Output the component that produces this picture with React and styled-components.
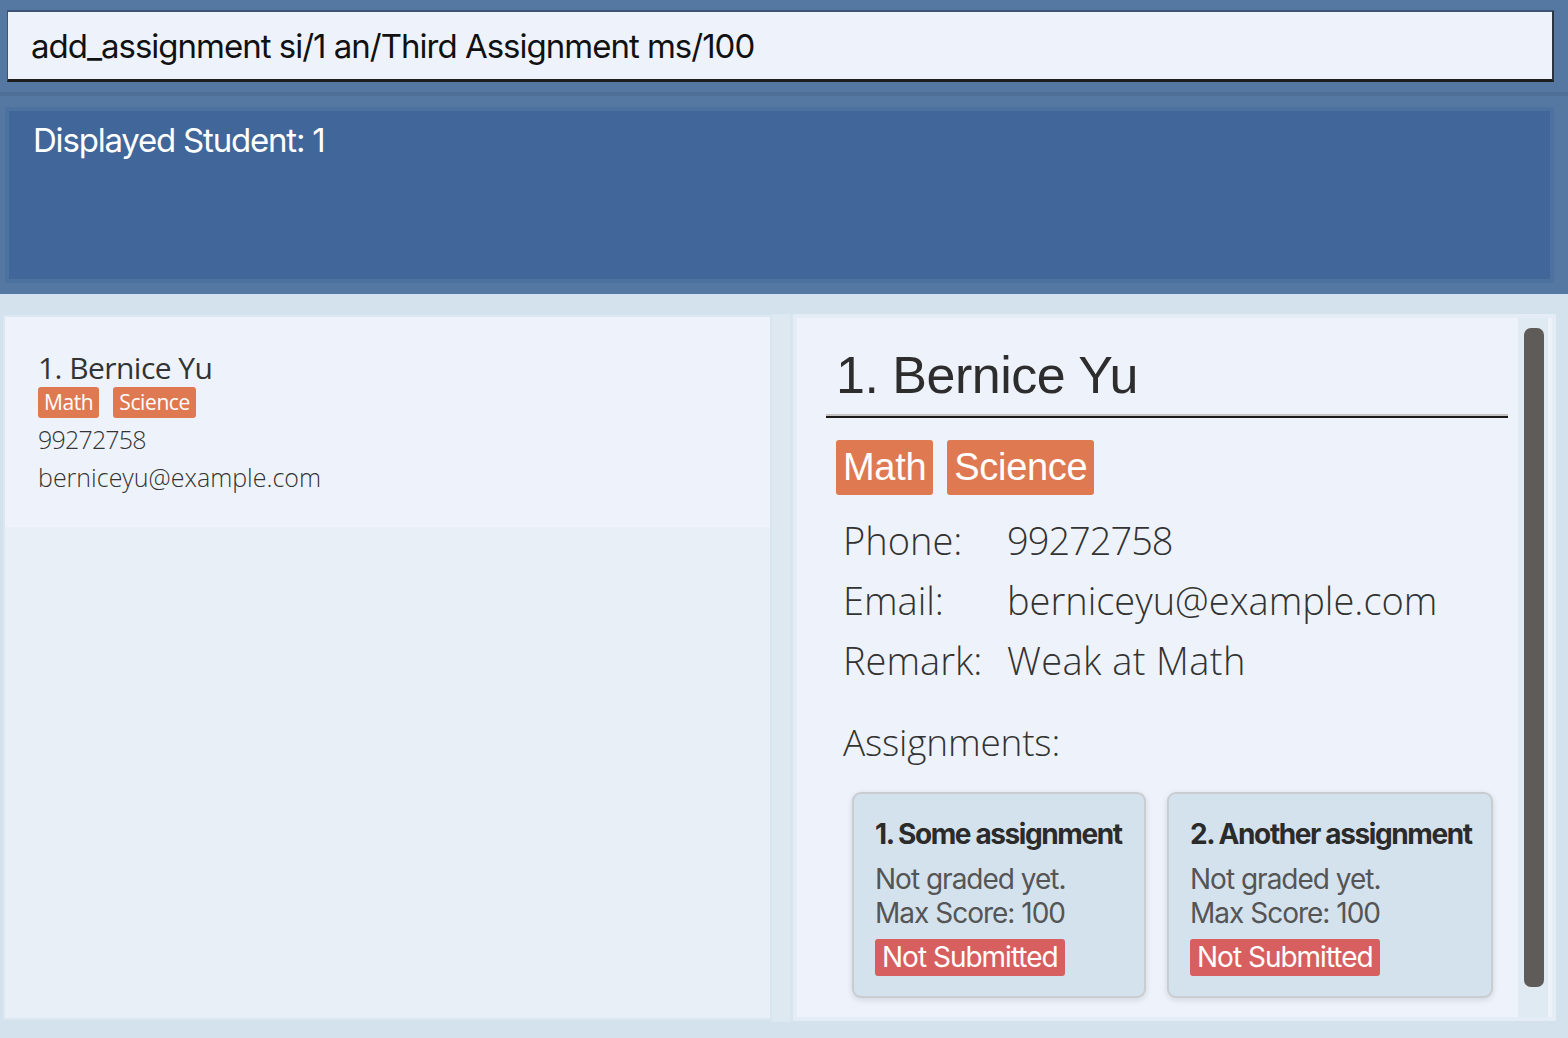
import React from "react";
import styled, { createGlobalStyle } from "styled-components";

const GlobalStyle = createGlobalStyle`
  html, body {
    margin: 0;
    padding: 0;
    background: #d4e2ed;
  }
  * {
    box-sizing: border-box;
  }
`;

const Window = styled.div`
  width: 1568px;
  height: 1038px;
  display: flex;
  flex-direction: column;
  background: #d4e2ed;
  overflow: hidden;
`;

const TopArea = styled.div`
  background: #5578a2;
  display: flex;
  flex-direction: column;
`;

const CommandBox = styled.div`
  margin: 10px 14px 10px 7px;
  height: 72px;
  background: #eef3fb;
  border-top: 2px solid #3d5573;
  border-left: 1px solid #3d5573;
  border-right: 2px solid #2b3542;
  border-bottom: 3px solid #1e1e1e;
  display: flex;
  align-items: center;
  padding-left: 23px;
  font-family: Inter, "Noto Sans", sans-serif;
  font-size: 33px;
  letter-spacing: -1px;
  color: #111;
`;

const Separator = styled.div`
  height: 4px;
  background: #4d6f98;
`;

const ResultWrap = styled.div`
  padding: 11px 14px 11px 5px;
`;

const ResultBox = styled.div`
  height: 176px;
  background: #41669a;
  border: 4px solid #4e72a0;
  padding: 9px 24px;
  font-family: Inter, "Noto Sans", sans-serif;
  font-size: 33px;
  letter-spacing: -1.2px;
  color: #ffffff;
`;

const MainArea = styled.div`
  flex: 1;
  display: flex;
  padding: 21px 12px 18px 3px;
  min-height: 0;
`;

const ListPanel = styled.div`
  width: 767px;
  background: #e8eff7;
  border: 2px solid #dce7f1;
  border-right: none;
  display: flex;
  flex-direction: column;
`;

const ListCard = styled.div`
  height: 210px;
  background: #eef3fb;
  padding: 34px 30px 34px 33px;
  font-family: "Open Sans", sans-serif;
  font-weight: 300;
  color: #333;
`;

const ListName = styled.div`
  font-size: 30px;
  line-height: 34px;
  letter-spacing: -0.55px;
  font-weight: 400;
`;

const TagRow = styled.div`
  display: flex;
  gap: ${(p) => p.gap}px;
  margin: ${(p) => p.margin};
`;

const Tag = styled.span`
  background: #df7952;
  color: #fff;
  border-radius: 3px;
  font-family: ${(p) => (p.big ? '"Liberation Sans", Arial, sans-serif' : '"Open Sans", sans-serif')};
  font-size: ${(p) => p.size}px;
  height: ${(p) => p.h}px;
  line-height: ${(p) => p.h}px;
  padding: 0 ${(p) => p.pad}px;
  letter-spacing: ${(p) => (p.big ? "-0.3px" : "-0.4px")};
  font-weight: 400;
`;

const ListLine = styled.div`
  font-size: 25px;
  line-height: 38px;
  letter-spacing: ${(p) => p.spacing || 0}px;
`;

const Divider = styled.div`
  width: 23px;
  background: #dde8f1;
  border-left: 2px solid #d8e4ee;
  border-right: 3px solid #d8e4ee;
  margin-top: -1px;
  margin-bottom: -2px;
`;

const DetailPanel = styled.div`
  flex: 1;
  display: flex;
  background: #eef3fb;
  border: 4px solid #e4edf6;
  margin-top: -1px;
  margin-bottom: -1px;
`;

const DetailContent = styled.div`
  flex: 1;
  padding: 27px 10px 0 29px;
  display: flex;
  flex-direction: column;
`;

const DetailName = styled.div`
  font-family: "Liberation Sans", Arial, sans-serif;
  font-size: 52px;
  line-height: 60px;
  color: #2d2d2d;
  padding-left: 10px;
  letter-spacing: -0.5px;
`;

const Underline = styled.div`
  height: 4px;
  margin-top: 9px;
  border-top: 2px solid #c4c4c4;
  border-bottom: 2px solid #1a1a1a;
`;

const InfoRow = styled.div`
  display: flex;
  padding-left: 17px;
  font-family: "Open Sans", sans-serif;
  font-weight: 300;
  font-size: 38px;
  line-height: 60px;
  color: #333;
`;

const Label = styled.span`
  width: 164px;
  flex-shrink: 0;
`;

const Value = styled.span`
  letter-spacing: ${(p) => p.spacing || 0}px;
`;

const Heading = styled.div`
  padding-left: 17px;
  margin-top: 22px;
  font-family: "Open Sans", sans-serif;
  font-weight: 300;
  font-size: 37px;
  line-height: 60px;
  color: #333;
  letter-spacing: -0.2px;
`;

const CardRow = styled.div`
  display: flex;
  gap: 21px;
  padding-left: 26px;
  margin-top: 20px;
`;

const AssignmentCard = styled.div`
  width: ${(p) => p.w}px;
  height: 206px;
  background: #d4e2ed;
  border: 2px solid #c9cdd1;
  border-radius: 9px;
  box-shadow: 0 2px 6px rgba(0, 0, 0, 0.12);
  padding: 22px 8px 23px 21px;
  font-family: Inter, "Noto Sans", sans-serif;
  letter-spacing: -1px;
  white-space: nowrap;
`;

const CardTitle = styled.div`
  font-size: 28px;
  font-weight: 700;
  line-height: 36px;
  letter-spacing: -1.4px;
  color: #2b2b2b;
  margin-bottom: 10px;
`;

const CardLine = styled.div`
  font-size: 28px;
  line-height: 34px;
  color: #555;
`;

const StatusBadge = styled.span`
  display: inline-block;
  margin-top: 9px;
  background: #d75f5f;
  color: #fff;
  border-radius: 3px;
  font-size: 28px;
  height: 37px;
  line-height: 37px;
  padding: 0 7px;
`;

const ScrollTrack = styled.div`
  width: 30px;
  background: #e0eaf3;
  margin-right: 4px;
  padding: 10px 4px 30px 6px;
  display: flex;
`;

const ScrollThumb = styled.div`
  flex: 1;
  background: #5f5b58;
  border-radius: 7px;
`;

const assignments = [
  { id: 1, name: "Some assignment", w: 294 },
  { id: 2, name: "Another assignment", w: 326 },
];

export default function App() {
  return (
    <>
      <GlobalStyle />
      <Window>
        <TopArea>
          <CommandBox>add_assignment si/1 an/Third Assignment ms/100</CommandBox>
          <Separator />
          <ResultWrap>
            <ResultBox>Displayed Student: 1</ResultBox>
          </ResultWrap>
        </TopArea>
        <MainArea>
          <ListPanel>
            <ListCard>
              <ListName>1. Bernice Yu</ListName>
              <TagRow gap={14} margin="2px 0 2px">
                <Tag size={21} h={31} pad={6}>Math</Tag>
                <Tag size={21} h={31} pad={6}>Science</Tag>
              </TagRow>
              <ListLine spacing={-0.8}>99272758</ListLine>
              <ListLine>berniceyu@example.com</ListLine>
            </ListCard>
          </ListPanel>
          <Divider />
          <DetailPanel>
            <DetailContent>
              <DetailName>1. Bernice Yu</DetailName>
              <Underline />
              <TagRow gap={14} margin="22px 0 15px 10px">
                <Tag big size={38} h={55} pad={7}>Math</Tag>
                <Tag big size={38} h={55} pad={7}>Science</Tag>
              </TagRow>
              <InfoRow>
                <Label>Phone:</Label>
                <Value spacing={-1}>99272758</Value>
              </InfoRow>
              <InfoRow>
                <Label>Email:</Label>
                <Value>berniceyu@example.com</Value>
              </InfoRow>
              <InfoRow>
                <Label>Remark:</Label>
                <Value spacing={0.4}>Weak at Math</Value>
              </InfoRow>
              <Heading>Assignments:</Heading>
              <CardRow>
                {assignments.map((a) => (
                  <AssignmentCard key={a.id} w={a.w}>
                    <CardTitle>
                      {a.id}. {a.name}
                    </CardTitle>
                    <CardLine>Not graded yet.</CardLine>
                    <CardLine>Max Score: 100</CardLine>
                    <StatusBadge>Not Submitted</StatusBadge>
                  </AssignmentCard>
                ))}
              </CardRow>
            </DetailContent>
            <ScrollTrack>
              <ScrollThumb />
            </ScrollTrack>
          </DetailPanel>
        </MainArea>
      </Window>
    </>
  );
}
